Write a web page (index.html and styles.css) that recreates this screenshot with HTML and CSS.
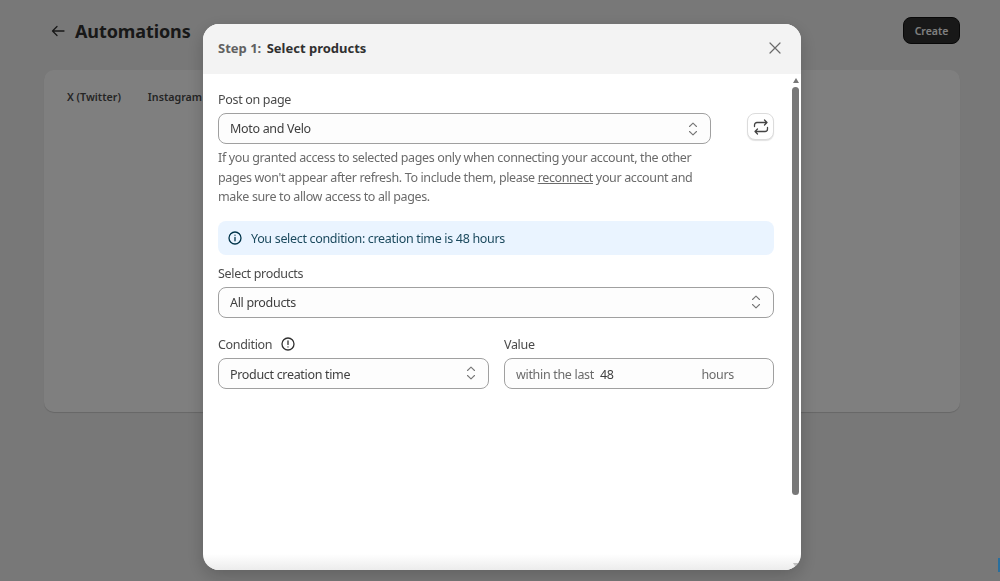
FILE: index.html
```html
<!DOCTYPE html>
<html lang="en">
<head>
<meta charset="utf-8">
<title>Automations</title>
<link rel="stylesheet" href="styles.css">
</head>
<body>
<div class="page">
  <header class="top">
    <div class="title-wrap">
      <svg class="back" width="14" height="12" viewBox="0 0 14 12" fill="none" stroke="#303030" stroke-width="1.3" stroke-linecap="round" stroke-linejoin="round"><path d="M13 6H1.5M6 1.5 1.5 6 6 10.5"/></svg>
      <h1 class="title">Automations</h1>
    </div>
    <button class="create">Create</button>
  </header>
  <section class="card">
    <nav class="tabs"><span>X (Twitter)</span><span>Instagram</span></nav>
  </section>
</div>
<div class="overlay">
  <div class="modal">
    <div class="modal-head">
      <div class="modal-title"><span class="step">Step 1:</span> Select products</div>
      <svg class="close" width="12" height="12" viewBox="0 0 12 12" fill="none" stroke="#6a6a6a" stroke-width="1.2" stroke-linecap="round"><path d="M1 1l10 10M11 1 1 11"/></svg>
    </div>
    <div class="modal-body">
      <div class="page-row">
        <div class="page-col">
          <label class="label">Post on page</label>
          <div class="field select"><span>Moto and Velo</span>
            <svg class="updown" width="10" height="14" viewBox="0 0 10 14" fill="none" stroke="#777" stroke-width="1.1" stroke-linecap="round" stroke-linejoin="round"><path d="M1.5 4.5 5 1.2l3.5 3.3M1.5 9.5 5 12.8l3.5-3.3"/></svg>
          </div>
          <p class="help">If you granted access to selected pages only when connecting your account, the other pages won't appear after refresh. To include them, please <u>reconnect</u> your account and make sure to allow access to all pages.</p>
        </div>
        <button class="refresh">
          <svg width="16" height="16" viewBox="0 0 16 16" fill="none" stroke="#444" stroke-width="1.3" stroke-linecap="round" stroke-linejoin="round"><path d="M1.5 7.5V6a2.5 2.5 0 0 1 2.5-2.5h10M11.5 1 14 3.5 11.5 6M14.5 8.5V10a2.5 2.5 0 0 1-2.5 2.5H2M4.5 10 2 12.5 4.5 15"/></svg>
        </button>
      </div>
      <div class="banner">
        <svg width="14" height="14" viewBox="0 0 14 14" fill="none" stroke="#00344a" stroke-width="1.3" stroke-linecap="round"><circle cx="7" cy="7" r="6"/><path d="M7 6.4v3.4M7 4.1v.1"/></svg>
        <span class="banner-text">You select condition: creation time is 48 hours</span>
      </div>
      <label class="label products-label">Select products</label>
      <div class="field select"><span>All products</span>
        <svg class="updown" width="10" height="14" viewBox="0 0 10 14" fill="none" stroke="#777" stroke-width="1.1" stroke-linecap="round" stroke-linejoin="round"><path d="M1.5 4.5 5 1.2l3.5 3.3M1.5 9.5 5 12.8l3.5-3.3"/></svg>
      </div>
      <div class="cond-row">
        <div class="cond-col">
          <label class="label cond-label"><span class="cond-text">Condition</span>
            <svg width="14" height="14" viewBox="0 0 14 14" fill="none" stroke="#303030" stroke-width="1.3" stroke-linecap="round"><circle cx="7" cy="7" r="6"/><path d="M7 3.8v3.6M7 9.8v.1"/></svg>
          </label>
          <div class="field select cond-field"><span>Product creation time</span>
            <svg class="updown" width="10" height="14" viewBox="0 0 10 14" fill="none" stroke="#777" stroke-width="1.1" stroke-linecap="round" stroke-linejoin="round"><path d="M1.5 4.5 5 1.2l3.5 3.3M1.5 9.5 5 12.8l3.5-3.3"/></svg>
          </div>
        </div>
        <div class="value-col">
          <label class="label cond-label"><span class="cond-text">Value</span></label>
          <div class="field value cond-field"><span class="muted">within the last</span><span class="num">48</span><span class="muted unit">hours</span></div>
        </div>
      </div>
    </div>
    <div class="scrollbar">
      <div class="arrow up"></div>
      <div class="thumb"></div>
      <div class="arrow down"></div>
    </div>
    <div class="fade"></div>
  </div>
  <div class="corner-blip"></div>
</div>
</body>
</html>
```
FILE: styles.css
```css
* { box-sizing: border-box; }
html, body { margin: 0; height: 100%; overflow: hidden; }
body {
  font-family: "Noto Sans", "Open Sans", sans-serif;
  font-size: 13px;
  color: #303030;
  background: #f1f1f1;
}
.page { padding: 17px 40px 0 44px; }
.top { display: flex; justify-content: space-between; align-items: center; height: 27px; }
.title-wrap { display: flex; align-items: center; gap: 10px; padding-left: 7px; }
.title { margin: 0; font-size: 18px; font-weight: 700; line-height: 28px; color: #303030; letter-spacing: -.1px; }
.create {
  width: 57px; height: 27px; padding: 0; border: 1px solid #111; border-radius: 8px;
  background: #303030; color: #fff; font: 600 10.5px "Noto Sans", sans-serif;
}
.card {
  margin-top: 26px; height: 342px; background: #fff; border-radius: 10px;
  box-shadow: 0 1px 1px rgba(0,0,0,.15); padding: 19px 23px;
}
.tabs { display: flex; gap: 27px; font-size: 10.7px; font-weight: 600; color: #4a4a4a; line-height: 16px; }

.overlay {
  position: fixed; inset: 0; background: rgba(0,0,0,.5);
  display: flex; justify-content: center; padding: 24px 0 0 4px;
}
.modal {
  position: relative; width: 598px; height: 546px; background: #fff; border-radius: 16px;
  overflow: hidden; box-shadow: 0 6px 18px rgba(0,0,0,.2);
}
.modal-head {
  height: 50px; background: #f3f3f3; display: flex; align-items: center;
  justify-content: space-between; padding: 0 20px 2px 15px;
}
.modal-title { font-size: 13px; font-weight: 700; color: #303030; }
.step { color: #616161; margin-right: 2px; }
.modal-body { padding: 17px 27px 0 15px; letter-spacing: -.32px; }
.page-row { display: flex; align-items: flex-start; gap: 36px; }
.page-col { width: 494px; }
.label { display: block; font-size: 12.5px; line-height: 18px; color: #4a4a4a; height: 18px; margin-bottom: 4px; }
.field {
  height: 31px; border: 1px solid #a0a0a0; border-radius: 8px; background: #fdfdfd;
  display: flex; align-items: center; padding: 0 11px; font-size: 12.5px; color: #404040;
}
.cond-field span { padding-top: 2px; }
.select { justify-content: space-between; }
.updown { margin-right: 1px; }
.help { margin: 4px 0 0; font-size: 12.5px; line-height: 19.5px; color: #6b6b6b; letter-spacing: -.36px; }
.refresh {
  margin-top: 22px; width: 27px; height: 27px; padding: 0; background: #fff;
  border: 1px solid #dcdcdc; border-radius: 8px; display: flex; align-items: center; justify-content: center;
  box-shadow: 0 1px 1px rgba(0,0,0,.12);
}
.banner {
  margin-top: 14px; height: 34px; background: #eaf4ff; border-radius: 8px;
  display: flex; align-items: center; gap: 9px; padding: 0 10px; font-size: 12.5px; color: #1c4a5e;
}
.banner-text { padding-top: 2px; }
.products-label { margin-top: 10px; margin-bottom: 4px; }
.cond-row { display: flex; gap: 15px; margin-top: 17px; }
.cond-col { width: 271px; }
.value-col { flex: 1; }
.cond-label { display: flex; align-items: center; gap: 9px; margin-bottom: 5px; }
.cond-text { padding-top: 2px; }
.value { padding-right: 39px; }
.muted { color: #6b6b6b; }
.num { margin-left: 6px; }
.unit { margin-left: auto; }
.scrollbar {
  position: absolute; top: 50px; right: 2px; bottom: 0; width: 7px;
  display: flex; flex-direction: column; align-items: center;
}
.thumb { width: 7px; height: 408px; margin-top: 4px; background: #787878; border-radius: 4px; }
.arrow { width: 0; height: 0; border-left: 3.5px solid transparent; border-right: 3.5px solid transparent; }
.arrow.up { margin-top: 4px; border-bottom: 5px solid #787878; }
.arrow.down { margin-top: auto; margin-bottom: 2px; border-top: 5px solid #787878; }
.fade {
  position: absolute; left: 0; right: 0; bottom: 0; height: 16px;
  background: linear-gradient(rgba(240,240,240,0), #ececec);
  pointer-events: none;
}
.corner-blip {
  position: absolute; right: 0; bottom: 9px; width: 2px; height: 14px; background: #2a6f9e;
}
```
